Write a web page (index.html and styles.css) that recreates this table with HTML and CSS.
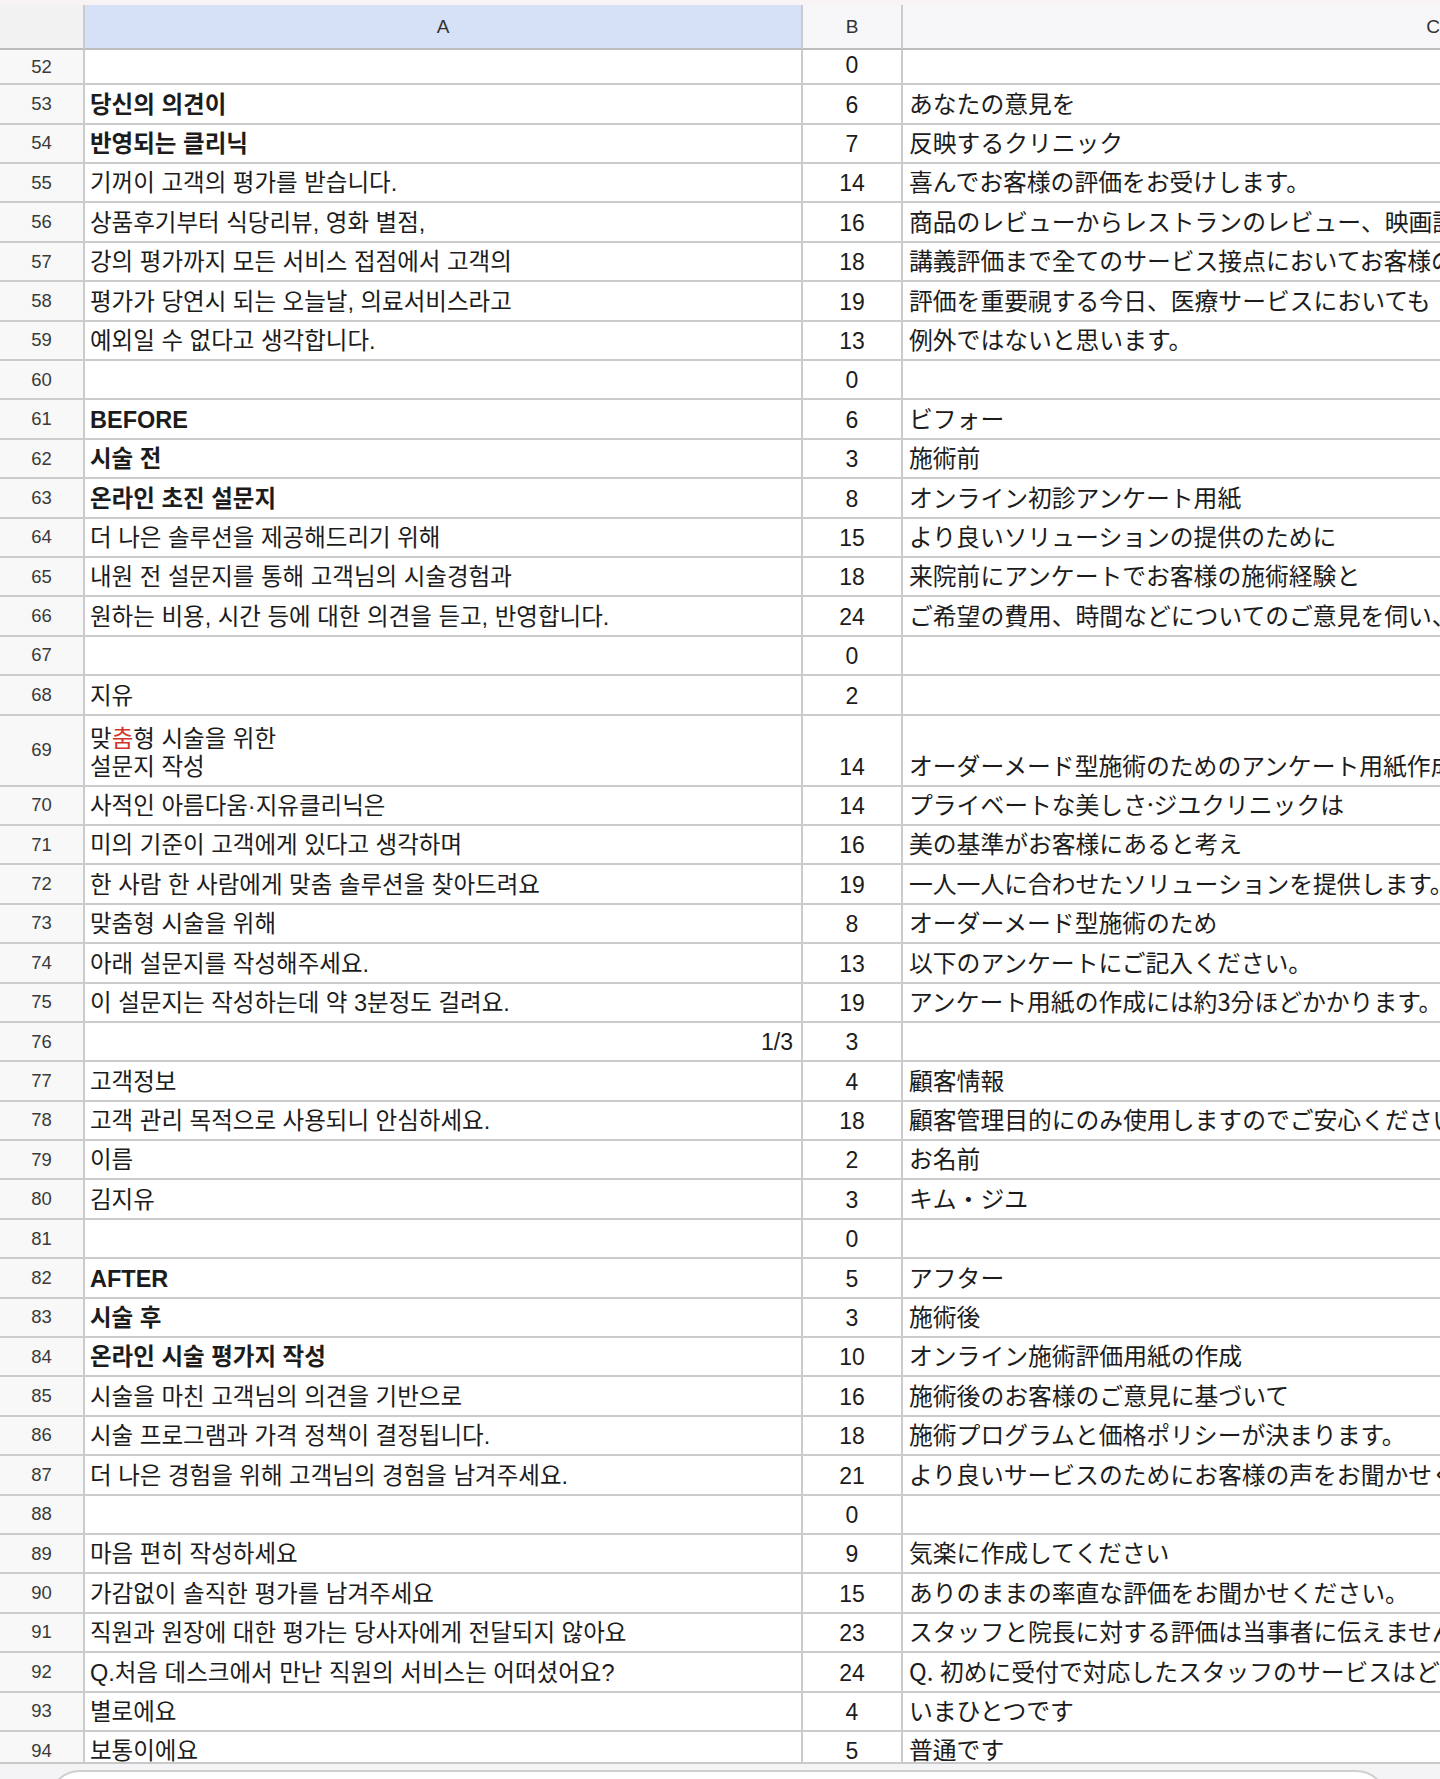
FILE: index.html
```html
<!DOCTYPE html>
<html lang="ko">
<head>
<meta charset="utf-8">
<title>Sheet</title>
<link rel="stylesheet" href="styles.css">
</head>
<body>
<div class="screen">
  <div class="topstrip"></div>
  <div class="sheet">
    <div class="row head">
      <div class="c num"></div>
      <div class="c a sel">A</div>
      <div class="c b">B</div>
      <div class="c cc"><span class="clabel">C</span></div>
    </div>
    <div class="row first"><div class="c num">52</div><div class="c a"></div><div class="c b">0</div><div class="c cc"></div></div>
    <div class="row"><div class="c num">53</div><div class="c a bold">당신의 의견이</div><div class="c b">6</div><div class="c cc">あなたの意見を</div></div>
    <div class="row"><div class="c num">54</div><div class="c a bold">반영되는 클리닉</div><div class="c b">7</div><div class="c cc">反映するクリニック</div></div>
    <div class="row"><div class="c num">55</div><div class="c a">기꺼이 고객의 평가를 받습니다.</div><div class="c b">14</div><div class="c cc">喜んでお客様の評価をお受けします。</div></div>
    <div class="row"><div class="c num">56</div><div class="c a">상품후기부터 식당리뷰, 영화 별점,</div><div class="c b">16</div><div class="c cc">商品のレビューからレストランのレビュー、映画評価、</div></div>
    <div class="row"><div class="c num">57</div><div class="c a">강의 평가까지 모든 서비스 접점에서 고객의</div><div class="c b">18</div><div class="c cc">講義評価まで全てのサービス接点においてお客様の</div></div>
    <div class="row"><div class="c num">58</div><div class="c a">평가가 당연시 되는 오늘날, 의료서비스라고</div><div class="c b">19</div><div class="c cc">評価を重要視する今日、医療サービスにおいても</div></div>
    <div class="row"><div class="c num">59</div><div class="c a">예외일 수 없다고 생각합니다.</div><div class="c b">13</div><div class="c cc">例外ではないと思います。</div></div>
    <div class="row"><div class="c num">60</div><div class="c a"></div><div class="c b">0</div><div class="c cc"></div></div>
    <div class="row"><div class="c num">61</div><div class="c a bold">BEFORE</div><div class="c b">6</div><div class="c cc">ビフォー</div></div>
    <div class="row"><div class="c num">62</div><div class="c a bold">시술 전</div><div class="c b">3</div><div class="c cc">施術前</div></div>
    <div class="row"><div class="c num">63</div><div class="c a bold">온라인 초진 설문지</div><div class="c b">8</div><div class="c cc">オンライン初診アンケート用紙</div></div>
    <div class="row"><div class="c num">64</div><div class="c a">더 나은 솔루션을 제공해드리기 위해</div><div class="c b">15</div><div class="c cc">より良いソリューションの提供のために</div></div>
    <div class="row"><div class="c num">65</div><div class="c a">내원 전 설문지를 통해 고객님의 시술경험과</div><div class="c b">18</div><div class="c cc">来院前にアンケートでお客様の施術経験と</div></div>
    <div class="row"><div class="c num">66</div><div class="c a">원하는 비용, 시간 등에 대한 의견을 듣고, 반영합니다.</div><div class="c b">24</div><div class="c cc">ご希望の費用、時間などについてのご意見を伺い、反映します。</div></div>
    <div class="row"><div class="c num">67</div><div class="c a"></div><div class="c b">0</div><div class="c cc"></div></div>
    <div class="row"><div class="c num">68</div><div class="c a">지유</div><div class="c b">2</div><div class="c cc"></div></div>
    <div class="row tall"><div class="c num">69</div><div class="c a">맞<span class="red">춤</span>형 시술을 위한<br>설문지 작성</div><div class="c b">14</div><div class="c cc">オーダーメード型施術のためのアンケート用紙作成</div></div>
    <div class="row"><div class="c num">70</div><div class="c a">사적인 아름다움·지유클리닉은</div><div class="c b">14</div><div class="c cc">プライベートな美しさ·ジユクリニックは</div></div>
    <div class="row"><div class="c num">71</div><div class="c a">미의 기준이 고객에게 있다고 생각하며</div><div class="c b">16</div><div class="c cc">美の基準がお客様にあると考え</div></div>
    <div class="row"><div class="c num">72</div><div class="c a">한 사람 한 사람에게 맞춤 솔루션을 찾아드려요</div><div class="c b">19</div><div class="c cc">一人一人に合わせたソリューションを提供します。</div></div>
    <div class="row"><div class="c num">73</div><div class="c a">맞춤형 시술을 위해</div><div class="c b">8</div><div class="c cc">オーダーメード型施術のため</div></div>
    <div class="row"><div class="c num">74</div><div class="c a">아래 설문지를 작성해주세요.</div><div class="c b">13</div><div class="c cc">以下のアンケートにご記入ください。</div></div>
    <div class="row"><div class="c num">75</div><div class="c a">이 설문지는 작성하는데 약 3분정도 걸려요.</div><div class="c b">19</div><div class="c cc">アンケート用紙の作成には約3分ほどかかります。</div></div>
    <div class="row"><div class="c num">76</div><div class="c a right">1/3</div><div class="c b">3</div><div class="c cc"></div></div>
    <div class="row"><div class="c num">77</div><div class="c a">고객정보</div><div class="c b">4</div><div class="c cc">顧客情報</div></div>
    <div class="row"><div class="c num">78</div><div class="c a">고객 관리 목적으로 사용되니 안심하세요.</div><div class="c b">18</div><div class="c cc">顧客管理目的にのみ使用しますのでご安心ください。</div></div>
    <div class="row"><div class="c num">79</div><div class="c a">이름</div><div class="c b">2</div><div class="c cc">お名前</div></div>
    <div class="row"><div class="c num">80</div><div class="c a">김지유</div><div class="c b">3</div><div class="c cc">キム・ジユ</div></div>
    <div class="row"><div class="c num">81</div><div class="c a"></div><div class="c b">0</div><div class="c cc"></div></div>
    <div class="row"><div class="c num">82</div><div class="c a bold">AFTER</div><div class="c b">5</div><div class="c cc">アフター</div></div>
    <div class="row"><div class="c num">83</div><div class="c a bold">시술 후</div><div class="c b">3</div><div class="c cc">施術後</div></div>
    <div class="row"><div class="c num">84</div><div class="c a bold">온라인 시술 평가지 작성</div><div class="c b">10</div><div class="c cc">オンライン施術評価用紙の作成</div></div>
    <div class="row"><div class="c num">85</div><div class="c a">시술을 마친 고객님의 의견을 기반으로</div><div class="c b">16</div><div class="c cc">施術後のお客様のご意見に基づいて</div></div>
    <div class="row"><div class="c num">86</div><div class="c a">시술 프로그램과 가격 정책이 결정됩니다.</div><div class="c b">18</div><div class="c cc">施術プログラムと価格ポリシーが決まります。</div></div>
    <div class="row"><div class="c num">87</div><div class="c a">더 나은 경험을 위해 고객님의 경험을 남겨주세요.</div><div class="c b">21</div><div class="c cc">より良いサービスのためにお客様の声をお聞かせください。</div></div>
    <div class="row"><div class="c num">88</div><div class="c a"></div><div class="c b">0</div><div class="c cc"></div></div>
    <div class="row"><div class="c num">89</div><div class="c a">마음 편히 작성하세요</div><div class="c b">9</div><div class="c cc">気楽に作成してください</div></div>
    <div class="row"><div class="c num">90</div><div class="c a">가감없이 솔직한 평가를 남겨주세요</div><div class="c b">15</div><div class="c cc">ありのままの率直な評価をお聞かせください。</div></div>
    <div class="row"><div class="c num">91</div><div class="c a">직원과 원장에 대한 평가는 당사자에게 전달되지 않아요</div><div class="c b">23</div><div class="c cc">スタッフと院長に対する評価は当事者に伝えません。</div></div>
    <div class="row"><div class="c num">92</div><div class="c a">Q.처음 데스크에서 만난 직원의 서비스는 어떠셨어요?</div><div class="c b">24</div><div class="c cc">Q. 初めに受付で対応したスタッフのサービスはどうでしたか？</div></div>
    <div class="row"><div class="c num">93</div><div class="c a">별로에요</div><div class="c b">4</div><div class="c cc">いまひとつです</div></div>
    <div class="row"><div class="c num">94</div><div class="c a">보통이에요</div><div class="c b">5</div><div class="c cc">普通です</div></div>
    <div class="row"><div class="c num">95</div><div class="c a">좋았어요</div><div class="c b">4</div><div class="c cc">良かったです</div></div>
  </div>
  <div class="bottombar">
    <div class="panel"></div>
  </div>
</div>
</body>
</html>
```

FILE: styles.css
```css
html, body {
  margin: 0;
  padding: 0;
  background: #ffffff;
}
.screen {
  position: relative;
  width: 1440px;
  height: 1779px;
  overflow: hidden;
  font-family: "Liberation Sans", "Noto Sans CJK KR", sans-serif;
  color: #1c1c1c;
}
.topstrip {
  height: 5px;
  background: #f8f3f5;
}
.sheet {
  display: flex;
  flex-direction: column;
}
.row {
  display: grid;
  grid-template-columns: 85px 718px 100px 1060px;
  height: 39.4px;
  flex: none;
}
.row.head { height: 45px; }
.row.first { height: 35.3px; }
.row.tall { height: 71px; }
.c {
  box-sizing: border-box;
  border-right: 2px solid #cbcbcb;
  border-bottom: 2px solid #cbcbcb;
  overflow: hidden;
  white-space: nowrap;
  display: flex;
  align-items: flex-end;
  padding: 0 6px 4px 5px;
  line-height: 28px;
  font-size: 23.5px;
}
.c.num {
  background: #f8f8f9;
  justify-content: center;
  align-items: center;
  padding: 0;
  font-size: 18.5px;
  color: #3a3a3a;
}
.c.a {
  font-family: "Liberation Sans", "Noto Sans CJK KR", sans-serif;
  white-space: pre;
}
.c.a.bold { font-weight: 700; }
.c.a.right { justify-content: flex-end; padding-right: 8px; font-size: 23px; }
.tall .c.a { white-space: normal; display: block; padding-top: 9px; line-height: 28.5px; }
.red { color: #d0362c; }
.c.b {
  justify-content: center;
  font-size: 23px;
  padding: 0 0 4px 0;
}
.c.cc {
  font-family: "Noto Sans CJK JP", sans-serif;
  font-size: 23.8px;
  padding: 0 0 6px 6px;
  border-right: none;
}
.head .c {
  background: #f7f7f9;
  border-bottom: 2px solid #bdbdbd;
  align-items: center;
  justify-content: center;
  padding: 0;
  font-size: 19px;
  color: #333;
}
.head .c.num { background: #f2f2f2; }
.head .c.a.sel { background: #d6e1f8; font-family: "Liberation Sans", sans-serif; }
.head .c.cc { font-family: "Liberation Sans", sans-serif; }
.bottombar {
  position: absolute;
  left: 0;
  right: 0;
  top: 1762px;
  height: 40px;
  background: #f4f4f6;
  border-top: 2px solid #c9c9c9;
}
.panel {
  position: absolute;
  left: 48px;
  right: 52px;
  top: 6px;
  height: 80px;
  background: #ffffff;
  border: 2px solid #cfcfcf;
  border-radius: 32px;
}
```
